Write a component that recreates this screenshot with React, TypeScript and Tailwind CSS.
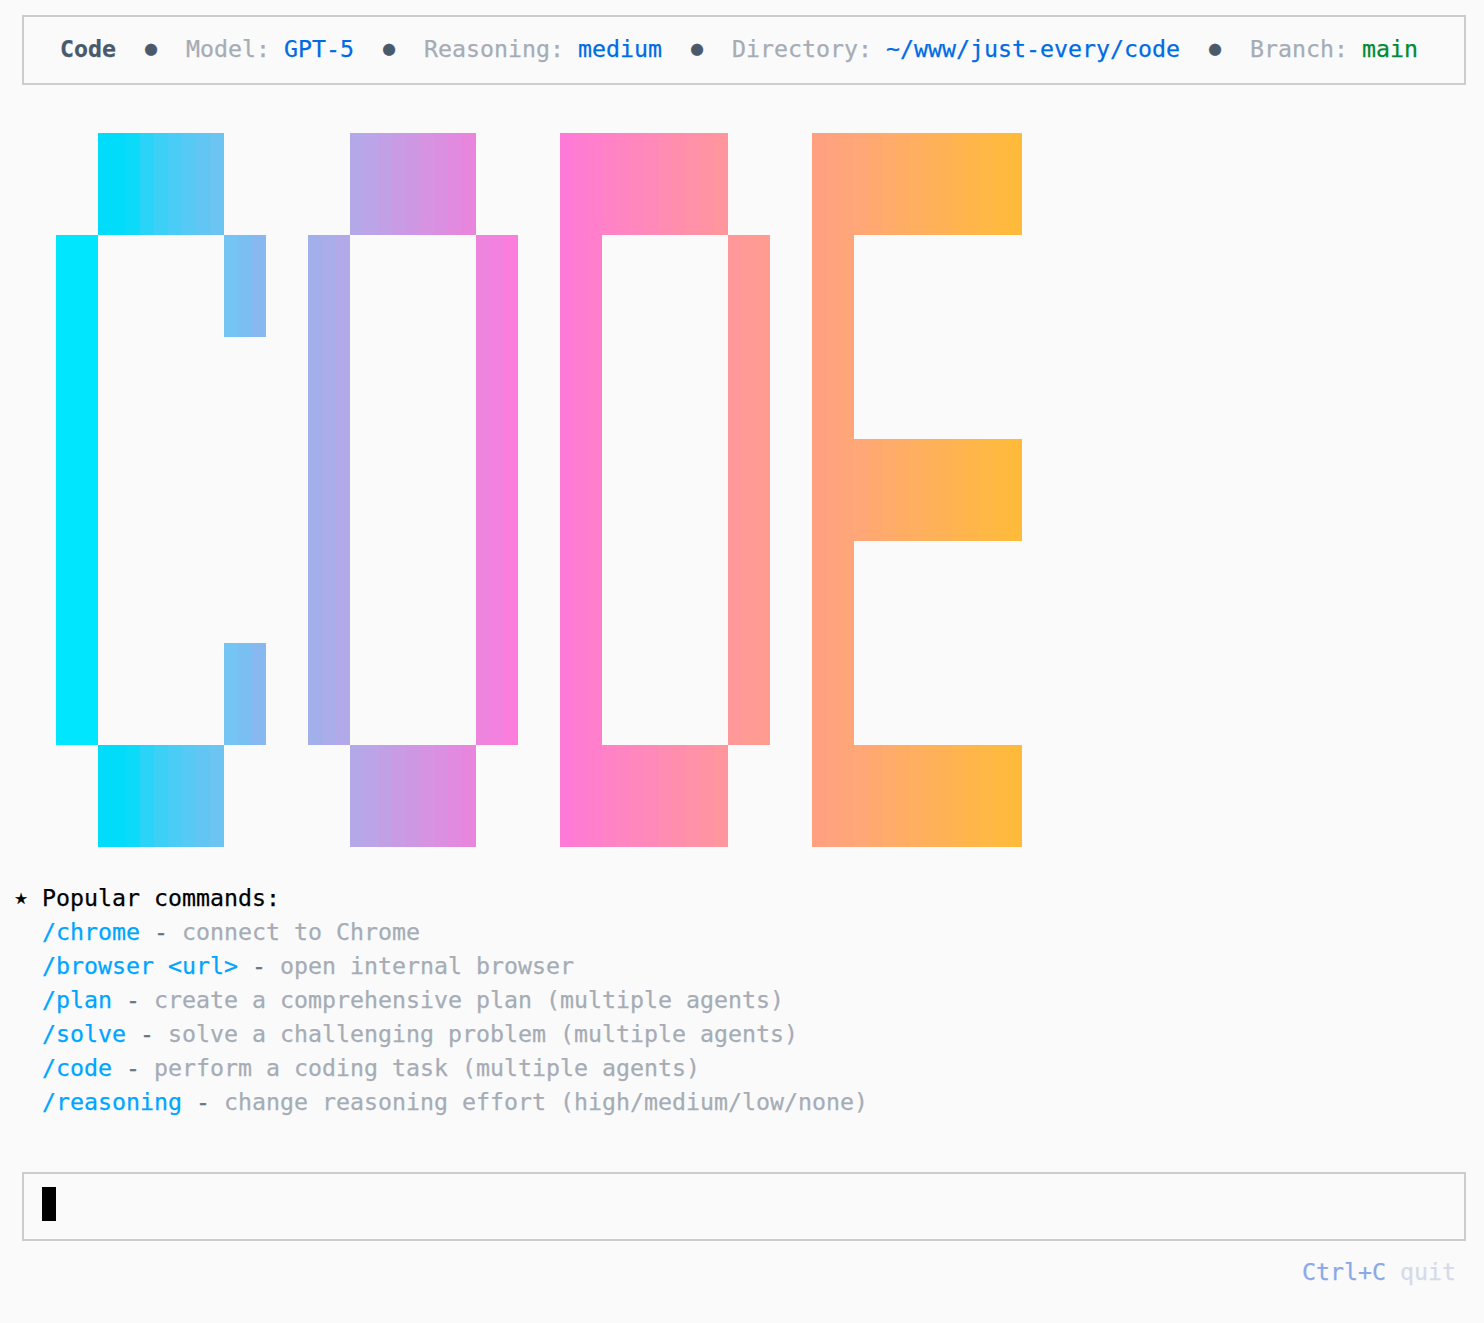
const LOGO = [
  " ###   ###  ####  #####",
  "#   # #   # #   # #    ",
  "#     #   # #   # #    ",
  "#     #   # #   # #####",
  "#     #   # #   # #    ",
  "#   # #   # #   # #    ",
  " ###   ###  ####  #####",
];

// colour stops by terminal column, counted from the left edge of the logo
const STOPS: [number, string][] = [
  [0, "#00e6ff"],
  [2, "#00e6ff"],
  [3, "#00dcf9"],
  [4, "#00dcf9"],
  [5, "#0bdaf9"],
  [6, "#2ad4f8"],
  [7, "#3cd0f7"],
  [8, "#49cdf6"],
  [9, "#57c9f5"],
  [10, "#61c6f4"],
  [11, "#6bc4f2"],
  [12, "#74c5f3"],
  [13, "#7abff1"],
  [14, "#88b8f0"],
  [18, "#a1afea"],
  [19, "#abadea"],
  [20, "#b2a9e9"],
  [21, "#b4a8e8"],
  [29, "#e886de"],
  [30, "#ef84df"],
  [31, "#f381df"],
  [32, "#fb7ddc"],
  [36, "#ff7ad6"],
  [42, "#ff89b8"],
  [48, "#ff9898"],
  [54, "#ffa181"],
  [57, "#ffa777"],
  [61, "#ffaf5f"],
  [68, "#ffba3b"],
];

const hex = (c: string) => [1, 3, 5].map((i) => parseInt(c.slice(i, i + 2), 16));

const colorAt = (col: number) => {
  for (let i = 1; i < STOPS.length; i++) {
    const [c1, v1] = STOPS[i - 1];
    const [c2, v2] = STOPS[i];
    if (col <= c2) {
      const t = (col - c1) / (c2 - c1);
      const a = hex(v1);
      const b = hex(v2);
      return `rgb(${a.map((x, k) => Math.round(x + (b[k] - x) * t)).join(",")})`;
    }
  }
  return STOPS[STOPS.length - 1][1];
};

const Logo = () => (
  <div className="mt-[48px] ml-[56px] flex flex-col">
    {LOGO.map((row, r) => (
      <div key={r} className="flex h-[102px]">
        {row.split("").flatMap((ch, u) =>
          [0, 1, 2].map((k) => (
            <div
              key={`${u}-${k}`}
              className="w-[14px] shrink-0"
              style={ch === "#" ? { backgroundColor: colorAt(u * 3 + k) } : undefined}
            />
          ))
        )}
      </div>
    ))}
  </div>
);

const Sep = () => (
  <span className="text-[#4a5a6a]">
    {"  "}
    <span className="relative -top-[2px] inline-block w-[14px] text-center text-[20px] leading-none">●</span>
    {"  "}
  </span>
);

const commands = [
  ["/chrome", "connect to Chrome"],
  ["/browser <url>", "open internal browser"],
  ["/plan", "create a comprehensive plan (multiple agents)"],
  ["/solve", "solve a challenging problem (multiple agents)"],
  ["/code", "perform a coding task (multiple agents)"],
  ["/reasoning", "change reasoning effort (high/medium/low/none)"],
];

export default function App() {
  return (
    <div className="min-h-[1323px] bg-[#fafafa] pt-[15px] text-[23.26px] leading-[34px] whitespace-pre font-['DejaVu_Sans_Mono',monospace] [-webkit-text-stroke:0.25px]">
      <div className="ml-[22px] mr-[18px] border-2 border-[#cccccc] pl-[36px] pt-[15px] pb-[17px] text-[#a6acb5]">
        <div className="h-[34px]">
          <span className="font-bold text-[#4a5a6a]">Code</span>
          <Sep />
          Model: <span className="text-[#006ce4]">GPT-5</span>
          <Sep />
          Reasoning: <span className="text-[#006ce4]">medium</span>
          <Sep />
          Directory: <span className="text-[#006ce4]">~/www/just-every/code</span>
          <Sep />
          Branch: <span className="text-[#008a35]">main</span>
        </div>
      </div>

      <Logo />

      <div className="mt-[34px] pl-[14px]">
        <div className="h-[34px] text-black">
          <span className="relative -top-[2px] inline-block w-[14px] text-center text-[21px] leading-none">★</span> Popular commands:
        </div>
        {commands.map(([cmd, desc]) => (
          <div key={cmd} className="pl-[28px] text-[#a6acb5]">
            <span className="text-[#00a5ff]">{cmd}</span>
            <span className="text-[#6b7580]"> - </span>
            {desc}
          </div>
        ))}
      </div>

      <div className="ml-[22px] mr-[18px] mt-[53px] border-2 border-[#cccccc] pt-[13px] pb-[18px] pl-[18px]">
        <div className="h-[34px] w-[14px] bg-black" />
      </div>

      <div className="mt-[14px] pr-[28px] text-right">
        <span className="text-[#8ba9e6]">Ctrl+C</span>
        <span className="text-[#d5dae8]"> quit</span>
      </div>
    </div>
  );
}
